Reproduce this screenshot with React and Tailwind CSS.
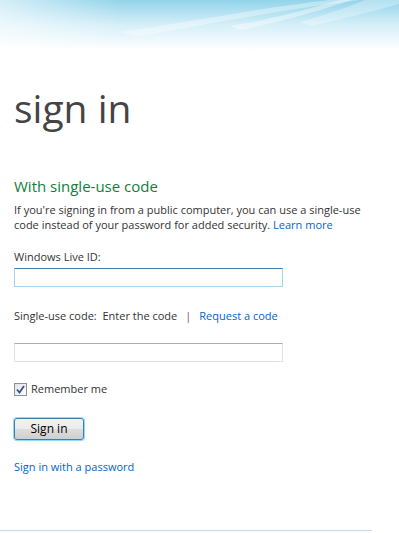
export default function App() {
  return (
    <div className="relative h-[533px] w-[399px] overflow-hidden bg-white font-['Open_Sans',sans-serif] text-[#444]">
      <div className="absolute inset-x-0 top-0 h-[50px] bg-gradient-to-b from-[#92d4ea] via-[#d6eff8] to-white" />
      <div className="absolute inset-y-0 left-0 h-[50px] w-[120px] bg-gradient-to-r from-white/60 to-transparent" />
      <svg className="absolute left-0 top-0" width="399" height="50" viewBox="0 0 399 50">
        <path d="M120 32 C200 20 260 8 330 0 L360 0 C280 10 220 22 140 36 Z" fill="white" opacity="0.35" />
        <path d="M230 26 C280 18 310 8 340 0 L352 0 C320 10 290 20 240 30 Z" fill="white" opacity="0.4" />
        <path d="M300 22 C330 14 350 6 365 0 L399 0 L399 4 C370 12 340 20 310 26 Z" fill="white" opacity="0.3" />
      </svg>

      <div className="relative flex flex-col px-[14px] pt-[84px]">
        <h1 className="text-[39px] leading-[48px] text-[#444]">sign in</h1>

        <h2 className="mt-[44px] text-[15px] leading-[20px] text-[#0e7f3c]">With single-use code</h2>
        <p className="mt-[6px] text-[11px] leading-[15px] text-[#333]">
          If you're signing in from a public computer, you can use a single-use code instead of your password for added security.{' '}
          <a className="text-[#0066cc]">Learn more</a>
        </p>

        <label className="mt-[18px] text-[11px] leading-[14px] text-[#333]">Windows Live ID:</label>
        <input className="mt-[4px] h-[19px] w-[269px] border border-[#a8d4ea] border-t-[#3c7fb1] outline-none" />

        <div className="mt-[22px] flex items-center text-[11px] leading-[14px] text-[#333]">
          <span>Single-use code:&nbsp; Enter the code</span>
          <span className="mx-[8px] text-[#8a4a5a]">|</span>
          <a className="text-[#0066cc]">Request a code</a>
        </div>
        <input className="mt-[20px] h-[19px] w-[269px] border border-[#e2e3ea] border-t-[#abadb3] outline-none" />

        <label className="mt-[20px] flex items-center gap-[4px] text-[11px] leading-[14px] text-[#333]">
          <span className="flex h-[13px] w-[13px] items-center justify-center border border-[#8e8f8f] bg-gradient-to-br from-[#dfe3e9] to-white">
            <svg width="9" height="9" viewBox="0 0 9 9">
              <path d="M1 4.5 L3.5 7.5 L8 1" fill="none" stroke="#3b4f8c" strokeWidth="1.8" />
            </svg>
          </span>
          Remember me
        </label>

        <button className="mt-[22px] h-[22px] w-[70px] self-start rounded-[3px] border border-[#3c7fb1] bg-[linear-gradient(#f2f2f2_0%,#ebebeb_50%,#dddddd_51%,#cfcfcf_100%)] text-[12px] leading-none text-black shadow-[0_0_0_1px_#8adcf8]">
          Sign in
        </button>

        <a className="mt-[20px] text-[11px] leading-[14px] text-[#0066cc]">Sign in with a password</a>
      </div>

      <div className="absolute bottom-[2px] left-0 h-px w-[372px] bg-[#c5d9f0]" />
    </div>
  )
}
